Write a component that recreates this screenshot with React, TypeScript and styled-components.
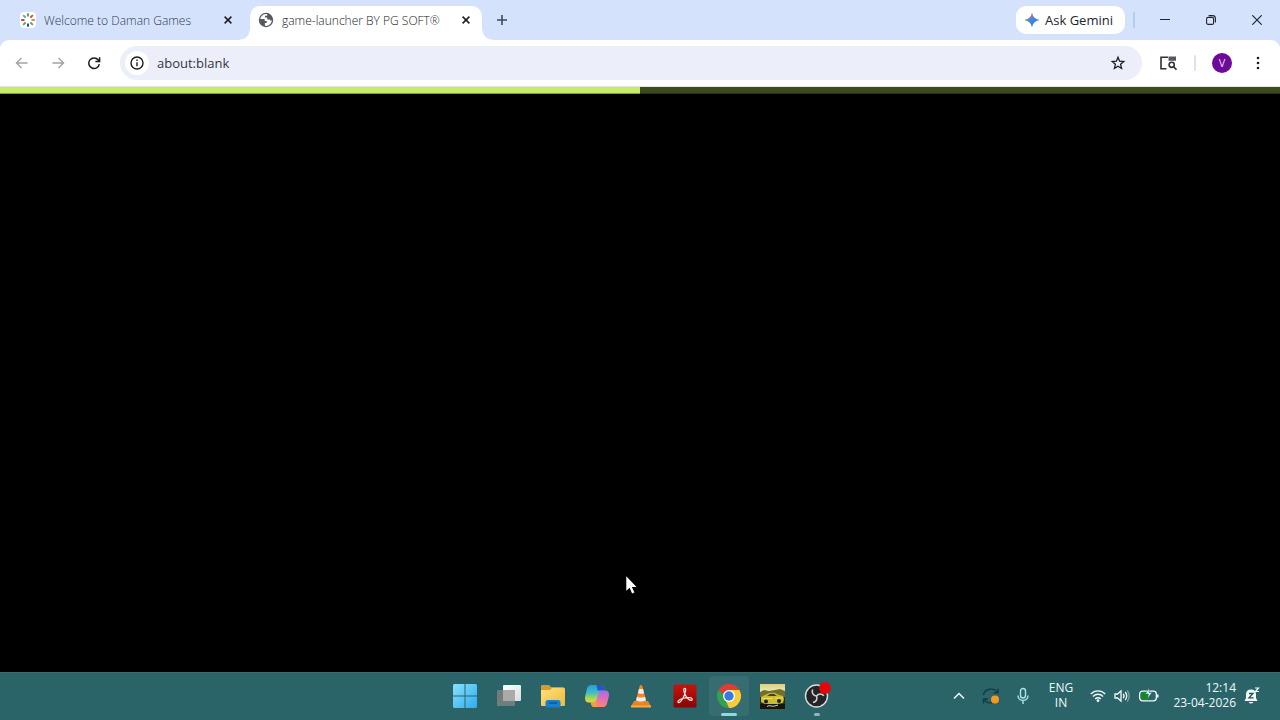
import React from "react";
import styled, { createGlobalStyle, css } from "styled-components";

const GlobalStyle = createGlobalStyle`
  *, *::before, *::after { box-sizing: border-box; }
  body { margin: 0; background: #000; font-family: "Open Sans", "Noto Sans", sans-serif; }
  button { border: 0; padding: 0; background: none; color: inherit; font: inherit; }
  svg { display: block; flex: none; }
`;

const Screen = styled.div`
  min-height: 100vh;
  display: flex;
  flex-direction: column;
`;

const TabStrip = styled.header`
  display: flex;
  height: 40px;
  background: #d5e2fb;
  color: #1f2430;
`;

const Tabs = styled.nav`
  flex: 1;
  min-width: 0;
  display: flex;
  align-items: flex-end;
  gap: 6px;
  padding-left: 12px;
`;

const Tab = styled.div<{ $active?: boolean }>`
  position: relative;
  display: flex;
  align-items: center;
  gap: 8px;
  flex: 0 1 232px;
  min-width: 0;
  height: 34px;
  padding: 0 8px 6px;
  border-radius: 10px 10px 0 0;
  color: #303a50;
  ${(p) =>
    p.$active &&
    css`
      background: #fff;
      color: #222;
      &::before,
      &::after {
        content: "";
        position: absolute;
        bottom: 0;
        width: 10px;
        height: 10px;
      }
      &::before {
        right: 100%;
        background: radial-gradient(circle at 0 0, transparent 9px, #fff 10px);
      }
      &::after {
        left: 100%;
        background: radial-gradient(circle at 100% 0, transparent 9px, #fff 10px);
      }
    `}
`;

const TabTitle = styled.span`
  flex: 1;
  min-width: 0;
  overflow: hidden;
  white-space: nowrap;
  padding-top: 2px;
  font-size: 12px;
  font-weight: 300;
  line-height: 16px;
`;

const IconButton = styled.button<{ $size: number; $dim?: boolean }>`
  flex: none;
  display: grid;
  place-items: center;
  width: ${(p) => p.$size}px;
  height: ${(p) => p.$size}px;
  border-radius: 50%;
  color: ${(p) => (p.$dim ? "#a3a3a6" : "#1c1d20")};
`;

const NewTab = styled(IconButton)`
  margin-bottom: 6px;
  color: #3f4a5e;
`;

const WindowTools = styled.div`
  display: flex;
  align-items: flex-start;
`;

const GeminiButton = styled.button`
  display: flex;
  align-items: center;
  gap: 5px;
  height: 28px;
  margin-top: 6px;
  && { padding: 0 12px 0 8px; background: #fff; }
  border-radius: 10px;
  white-space: nowrap;
`;

const GeminiLabel = styled.span`
  font-size: 13px;
  line-height: 16px;
`;

const Separator = styled.span<{ $tone: string }>`
  width: 2px;
  height: 16px;
  background: ${(p) => p.$tone};
  border-radius: 1px;
`;

const StripSeparator = styled(Separator)`
  margin: 12px 7px 0 8px;
`;

const WindowButton = styled.button`
  display: grid;
  place-items: center;
  width: 46px;
  height: 40px;
`;

const ToolbarBack = styled.div`
  background: #d5e2fb;
`;

const Toolbar = styled.form`
  display: flex;
  align-items: center;
  gap: 12px;
  height: 47px;
  padding: 0 8px;
  background: #fff;
  border-bottom: 1px solid #e2e6df;
  border-radius: 9px 9px 0 0;
`;

const ButtonGroup = styled.div`
  display: flex;
  gap: 8px;
`;

const AddressBar = styled.div`
  flex: 1;
  min-width: 0;
  display: flex;
  align-items: center;
  gap: 8px;
  height: 34px;
  padding: 0 14px 0 5px;
  border-radius: 17px;
  background: #eceffa;
`;

const SiteInfo = styled(IconButton)`
  && { background: #fff; }
`;

const AddressInput = styled.input`
  flex: 1;
  min-width: 0;
  border: 0;
  padding: 0;
  outline: 0;
  background: transparent;
  color: #35363d;
  font-family: inherit;
  font-size: 13px;
  line-height: 20px;
`;

const Avatar = styled.span`
  display: grid;
  place-items: center;
  width: 20px;
  height: 20px;
  border-radius: 50%;
  background: #6d0a9a;
  color: #eadcf2;
  font-size: 11px;
  line-height: 16px;
`;

const Page = styled.main`
  flex: 1;
  position: relative;
  background: #000;
`;

const Track = styled.div`
  height: 7px;
  background: #3c4a1d;
  border-bottom: 1px solid #29330f;
`;

const Fill = styled.div`
  height: 7px;
  background: #c5ec66;
  border-bottom: 1px solid #7d9a33;
`;

const Pointer = styled.svg`
  position: absolute;
  left: 626px;
  top: 489px;
`;

const Taskbar = styled.footer`
  display: grid;
  grid-template-columns: 1fr auto 1fr;
  align-items: center;
  height: 48px;
  background: #2b6468;
  box-shadow: inset 0 1px #3d6a6d;
  color: #f0fafa;
`;

const Apps = styled.nav`
  grid-column: 2;
  display: flex;
  gap: 4px;
  padding-left: 1px;
`;

const AppButton = styled.button<{ $active?: boolean; $mark?: number }>`
  position: relative;
  display: grid;
  place-items: center;
  width: 40px;
  height: 40px;
  border-radius: 4px;
  && { background: ${(p) => (p.$active ? "#376d71" : "transparent")}; }
  &::after {
    content: "";
    position: absolute;
    bottom: 0;
    width: ${(p) => p.$mark ?? 0}px;
    height: 3px;
    border-radius: 2px;
    background: ${(p) => (p.$active ? "#8adbe4" : "#94b5b8")};
  }
`;

const Tray = styled.div`
  display: flex;
  justify-content: flex-end;
  align-items: center;
  padding-right: 20px;
`;

const TrayButton = styled.button<{ $width: number }>`
  display: grid;
  place-items: center;
  width: ${(p) => p.$width}px;
  height: 40px;
`;

const TrayText = styled.span`
  display: block;
  padding-bottom: 2px;
  font-size: 12px;
  line-height: 15px;
  white-space: nowrap;
`;

const QuickSettings = styled.button`
  && { padding: 0 7px; }
  display: flex;
  align-items: center;
  gap: 8px;
  height: 40px;
`;

const Clock = styled.button`
  display: flex;
  align-items: center;
  gap: 8px;
  height: 40px;
`;

const ClockText = styled(TrayText)`
  min-width: 69px;
  text-align: right;
`;

const CloseIcon = () => (
  <svg width="10" height="10" viewBox="0 0 10 10" stroke="currentColor" strokeWidth="1.5">
    <path d="M1.6 1.6l6.8 6.8M8.4 1.6L1.6 8.4" />
  </svg>
);

const BurstIcon = () => {
  const colors = ["#5f9a60", "#bb5148", "#d98b4d", "#54a07c", "#334c55", "#59a56d", "#c24945", "#73a79e"];
  return (
    <svg width="16" height="16" viewBox="0 0 16 16">
      <rect width="16" height="16" rx="4" fill="#fff" />
      {colors.map((c, i) => (
        <path key={i} d="M8 1.9v1.900" stroke={c} strokeWidth="1.900" strokeLinecap="round" transform={`rotate(${i * 45} 8 8)`} />
      ))}
    </svg>
  );
};

const GlobeIcon = () => (
  <svg width="16" height="16" viewBox="0 0 16 16">
    <circle cx="8" cy="8" r="7.2" fill="#56595e" />
    <path d="M9.2 2.2C6 1.5 2.8 3.7 2.2 7l1.4.1h3.1v1.8h2v2.2H6.9v2.7c3.4.6 6.6-1.7 7-5.2h-1.700V7.400H9.200V5.500H7V3.700h2.200z" fill="#fff" />
  </svg>
);

const GeminiIcon = () => (
  <svg width="16" height="16" viewBox="0 0 16 16">
    <defs>
      <linearGradient id="gem" x1="0.3" y1="0" x2="0.7" y2="0.8">
        <stop offset="0.1" stopColor="#ec5a50" />
        <stop offset="0.42" stopColor="#7a7fc0" />
        <stop offset="0.6" stopColor="#3b86ee" />
        <stop offset="1" stopColor="#367df0" />
      </linearGradient>
      <linearGradient id="gemWarm" x1="0" y1="0.6" x2="0.6" y2="0.6">
        <stop offset="0.1" stopColor="#efb82e" />
        <stop offset="0.6" stopColor="#4aa95e" />
        <stop offset="1" stopColor="#4aa95e" stopOpacity="0" />
      </linearGradient>
    </defs>
    <path d="M8 .5C9 5 11 7 15.500 8 11 9 9 11 8 15.500 7 11 5 9 .5 8 5 7 7 5 8 .5z" fill="url(#gem)" />
    <path d="M.5 8C5 7 6 6.500 8 8v7.500C7 11 5 9 .5 8z" fill="url(#gemWarm)" />
  </svg>
);

const Arrow = ({ forward }: { forward?: boolean }) => (
  <svg width="14" height="14" viewBox="0 0 14 14" fill="none" stroke="currentColor" strokeWidth="1.4">
    <path d={forward ? "M1.500 7h11M7.500 2l5 5-5 5" : "M12.500 7h-11M6.500 2l-5 5 5 5"} />
  </svg>
);

const ReloadIcon = () => (
  <svg width="14" height="14" viewBox="0 0 14 14" fill="none" stroke="currentColor" strokeWidth="1.5">
    <path d="M12.300 8.100A5.300 5.300 0 1 1 11.300 4L12.300 5.200M12.600 1.200v4.200H8.400" />
  </svg>
);

const InfoIcon = () => (
  <svg width="14" height="14" viewBox="0 0 14 14" fill="none" stroke="currentColor" strokeWidth="1.4">
    <circle cx="7" cy="7" r="6" />
    <path d="M7 6.200v4M7 3.600v1.500" />
  </svg>
);

const StarIcon = () => (
  <svg width="16" height="16" viewBox="0 0 16 16" fill="none" stroke="currentColor" strokeWidth="1.3">
    <path d="M8 2.300l1.600 3.900 4.200.4-3.200 2.700 1 4.200L8 11.300l-3.600 2.200 1-4.200-3.200-2.700 4.200-.4z" />
  </svg>
);

const SidePanelSearchIcon = () => (
  <svg width="18" height="16" viewBox="0 0 18 16" fill="none" stroke="#303237" strokeWidth="1.6">
    <path d="M9 2.300H2v11.400H7.500" />
    <path d="M9.500 1.500h7.500v4.300H9.500z" fill="#55585e" stroke="none" />
    <circle cx="12.700" cy="9.800" r="2.600" />
    <path d="M14.600 11.800l2.900 2.900" />
  </svg>
);

const StartIcon = () => (
  <svg width="24" height="24" viewBox="0 0 24 24">
    <defs>
      <linearGradient id="win" x1="0" y1="0" x2="1" y2="1">
        <stop stopColor="#8be0fb" />
        <stop offset="1" stopColor="#2badf0" />
      </linearGradient>
    </defs>
    <path d="M1 0h10.500v11.500H0V1zM12.500 0H23l1 1v10.500H12.500zM0 12.500h11.500V24H1l-1-1zM12.500 12.500H24V23l-1 1H12.500z" fill="url(#win)" />
  </svg>
);

const TaskViewIcon = () => (
  <svg width="26" height="24" viewBox="0 0 26 24">
    <defs>
      <linearGradient id="tv" x1="0" y1="0" x2="1" y2="1">
        <stop stopColor="#fff" />
        <stop offset="1" stopColor="#d9dede" />
      </linearGradient>
    </defs>
    <rect x="1" y="6" width="18" height="16" rx="1" fill="#737c7d" />
    <rect x="7" y="1" width="18" height="16" rx="1" fill="url(#tv)" />
    <path d="M7 6h12v11H7z" fill="#a9abab" />
  </svg>
);

const FolderIcon = () => (
  <svg width="26" height="24" viewBox="0 0 26 24">
    <defs>
      <linearGradient id="fold" x1="0" y1="0" x2="1" y2="1">
        <stop stopColor="#fde083" />
        <stop offset="1" stopColor="#efbb35" />
      </linearGradient>
    </defs>
    <path d="M1 2q0-1 1-1h7l2 2h12q1 0 1 1v8H1z" fill="#d79d22" />
    <path d="M1 6h9l2-2h12q1 0 1 1v16q0 1-1 1H2q-1 0-1-1z" fill="url(#fold)" />
    <path d="M5.500 23.500v-5q0-2.500 2.500-2.500h10q2.500 0 2.500 2.500v5z" fill="#197fc7" />
    <path d="M9 19h8" stroke="#0b5797" strokeWidth="1.500" />
  </svg>
);

const CopilotIcon = () => (
  <svg width="26" height="24" viewBox="0 0 26 24">
    <defs>
      <linearGradient id="cpA" x1="0" y1="0" x2="0" y2="1">
        <stop stopColor="#249edc" />
        <stop offset="0.45" stopColor="#42bec4" />
        <stop offset="0.75" stopColor="#a5d850" />
        <stop offset="1" stopColor="#edd244" />
      </linearGradient>
      <linearGradient id="cpB" x1="0.5" y1="0" x2="0.4" y2="1">
        <stop stopColor="#a36dea" />
        <stop offset="0.5" stopColor="#e66eb9" />
        <stop offset="1" stopColor="#ff8864" />
      </linearGradient>
    </defs>
    <path d="M7 1h10q2 0 2.600 2l.9 3.500h-4L12.500 17q-.6 1.500-2.500 1.500H5Q.5 18.500 1 13L3 4.500Q4 1 7 1z" fill="url(#cpA)" />
    <path d="M12.500 1H17q2 0 2.600 2l.9 3.500h-7z" fill="#2357c5" />
    <path d="M16.500 6.500H21q4.500 0 4 5L23 19.500q-1 3.500-4 3.500H10q-2 0-2.600-2l-.9-3h3.500q2 0 2.600-2L15 8q.5-1.500 1.500-1.500z" fill="url(#cpB)" />
    <path d="M6.500 18H10q1.500 0 2.300-1.500L13 23h-3q-2 0-2.600-2z" fill="#eba04a" />
  </svg>
);

const VlcIcon = () => (
  <svg width="22" height="24" viewBox="0 0 22 24">
    <path d="M4 17h14l3 5.500H1z" fill="#e78422" />
    <path d="M1 21.500h20v2H1z" fill="#f5ac4f" />
    <path d="M9.800 1.500q1.200-.8 2.400 0L16.500 18q-5.500 3-11 0z" fill="#ef8729" />
    <path d="M9 5h4l1.100 4.200q-3.100 1.300-6.200 0zM7 12.700q4 1.800 8 0l.9 3.500q-4.900 2.600-9.800 0z" fill="#efece7" />
  </svg>
);

const AcrobatIcon = () => (
  <svg width="24" height="24" viewBox="0 0 24 24">
    <defs>
      <linearGradient id="acro" x1="0" y1="0" x2="0" y2="1">
        <stop stopColor="#c8120b" />
        <stop offset="1" stopColor="#850705" />
      </linearGradient>
    </defs>
    <rect x="0.500" y="0.500" width="23" height="23" rx="1.500" fill="url(#acro)" />
    <path d="M11.800 4.300c-1.600 0-1.200 3 .2 6 1.500 3.200 4.200 6.100 6.200 6 1.600-.1 1.600-2.200-1.500-2.600-3.700-.5-9.800 1-11.400 3.200-1 1.500.5 2.500 1.900 1 2.100-2.200 4.600-7.400 5.300-10.800.4-1.800.1-2.800-.7-2.800z" fill="none" stroke="#fbe9e7" strokeWidth="1.200" />
  </svg>
);

const ChromeIcon = () => (
  <svg width="26" height="26" viewBox="0 0 26 26">
    <path d="M13 13L2.600 7A12 12 0 0 1 23.400 7z" fill="#dd3d35" />
    <path d="M13 13L23.400 7A12 12 0 0 1 13 25z" fill="#f9cb36" />
    <path d="M13 13L13 25A12 12 0 0 1 2.600 7z" fill="#32a24f" />
    <path d="M13 7h10.400l-5 9z" fill="#f9cb36" />
    <path d="M18.200 16L13 25l-3-7z" fill="#f9cb36" />
    <path d="M7.800 16L2.600 7l6.400 2z" fill="#32a24f" />
    <path d="M2.600 7A12 12 0 0 1 23.400 7H13L8 12z" fill="#dd3d35" />
    <circle cx="13" cy="13" r="6" fill="#fff" />
    <circle cx="13" cy="13" r="4.700" fill="#3579e4" />
  </svg>
);

const CarPhotoIcon = () => (
  <svg width="25" height="25" viewBox="0 0 25 25">
    <defs>
      <linearGradient id="sky" x1="0" y1="0" x2="0" y2="1">
        <stop stopColor="#d8cf86" />
        <stop offset="1" stopColor="#f1ecb0" />
      </linearGradient>
    </defs>
    <path d="M0 0h25v25H0z" fill="#2a2d12" />
    <path d="M0 0h25v8H0z" fill="url(#sky)" />
    <path d="M0 8l4-2 5 1 6-1 5-1 5 2v6H0z" fill="#6f7030" />
    <path d="M1 13q4-2 6-3 4-2 8-1l4 2 4 1 1 3-1 4-6 1H5l-4-2z" fill="#cbbd2f" />
    <path d="M7 12q3-3 7-2l3 2z" fill="#3a421b" />
    <path d="M2 14.500h11M15 14h8" stroke="#eee05c" />
    <circle cx="6" cy="17.500" r="2" fill="#1d200e" />
    <circle cx="19" cy="17" r="2" fill="#1d200e" />
    <path d="M0 20h25v5H0z" fill="#14160a" />
    <path d="M7 22.500q2-1.500 4-.5t7-1" stroke="#d8d3a0" fill="none" />
  </svg>
);

const ObsIcon = () => (
  <svg width="28" height="28" viewBox="0 0 28 28">
    <circle cx="13.500" cy="14" r="11" fill="#242326" stroke="#d9dddd" strokeWidth="1.400" />
    <g fill="none" stroke="#cdcfd0" strokeWidth="1.600">
      {[0, 120, 240].map((a) => (
        <path key={a} d="M13.500 14c-3.400-.5-5-3.200-3.900-6.400" transform={`rotate(${a} 13.500 14)`} />
      ))}
    </g>
    <circle cx="22" cy="6" r="6" fill="#e4060b" />
  </svg>
);

const SyncIcon = () => (
  <svg width="18" height="18" viewBox="0 0 18 18" fill="none" stroke="#123b47" strokeWidth="1.4">
    <path d="M1.500 8A7.500 6.500 0 0 1 15.500 5.500M16 1.500v4.300h-4.300M1.500 16.500v-4.500h4.500M2 12A7.500 6.500 0 0 0 10 15.800" />
    <circle cx="13" cy="12.500" r="4" fill="#f39a22" stroke="none" />
  </svg>
);

const MicIcon = () => (
  <svg width="14" height="18" viewBox="0 0 14 18" fill="none" stroke="#a9e5e6" strokeWidth="1.4">
    <rect x="4.500" y="1.500" width="5" height="9.500" rx="2.500" />
    <path d="M2 8.500c0 6.500 10 6.500 10 0M7 13.500V17" />
  </svg>
);

const WifiIcon = () => (
  <svg width="16" height="16" viewBox="0 0 16 16" fill="none" stroke="currentColor" strokeWidth="1.4">
    <path d="M.8 6c4-4.200 10.400-4.200 14.400 0M3 8.500c2.800-3 7.200-3 10 0M5.200 11c1.600-1.700 4-1.700 5.600 0" />
    <circle cx="8" cy="12.700" r="1.400" fill="currentColor" stroke="none" />
  </svg>
);

const VolumeIcon = () => (
  <svg width="16" height="16" viewBox="0 0 16 16" fill="none" stroke="currentColor" strokeWidth="1.300">
    <path d="M1 6v4h2.500L7 13V3L3.500 6z" />
    <path d="M9.200 5.800q1.600 2.200 0 4.400M11.200 4q3 4 0 8" />
    <path d="M13.200 2.500q4 5.500 0 11" opacity="0.4" />
  </svg>
);

const BatteryIcon = () => (
  <svg width="22" height="16" viewBox="0 0 22 16">
    <rect x="3" y="4" width="8" height="8" rx="2" fill="#128a25" />
    <rect x="1.600" y="3.200" width="16.800" height="9.600" rx="3" fill="none" stroke="#effafa" strokeWidth="1.300" />
    <path d="M19.800 6.500v3" stroke="#effafa" strokeWidth="1.500" />
    <path d="M11 0L7.500 6h3l-1 4.500L14 4.500h-3z" fill="#effafa" stroke="#2b6468" strokeWidth="0.500" />
  </svg>
);

const BellIcon = () => (
  <svg width="16" height="18" viewBox="0 0 16 18">
    <path d="M.5 14L2 11V7.500q0-5 5-5t5 5V11l1.500 3zM4.500 15h5q-2.500 3-5 0z" fill="#f0fafa" />
    <path d="M5 6.500h4L5 10.800h4.500" stroke="#235054" strokeWidth="1.300" fill="none" />
    <path d="M11 1h3.500L11.500 4.500h3.500" stroke="#f0fafa" strokeWidth="1.200" fill="none" />
  </svg>
);

const apps = [
  { name: "Start", icon: <StartIcon /> },
  { name: "Task view", icon: <TaskViewIcon /> },
  { name: "File Explorer", icon: <FolderIcon /> },
  { name: "Copilot", icon: <CopilotIcon /> },
  { name: "VLC", icon: <VlcIcon /> },
  { name: "Acrobat", icon: <AcrobatIcon /> },
  { name: "Chrome", icon: <ChromeIcon />, active: true, mark: 16 },
  { name: "Game", icon: <CarPhotoIcon /> },
  { name: "OBS Studio", icon: <ObsIcon />, mark: 6 },
];

export default function App() {
  const progress = 50;
  return (
    <Screen>
      <GlobalStyle />
      <TabStrip>
        <Tabs aria-label="Tabs">
          <Tab>
            <BurstIcon />
            <TabTitle>Welcome to Daman Games</TabTitle>
            <IconButton $size={16} aria-label="Close tab"><CloseIcon /></IconButton>
          </Tab>
          <Tab $active>
            <GlobeIcon />
            <TabTitle>game-launcher BY PG SOFT®</TabTitle>
            <IconButton $size={16} aria-label="Close tab"><CloseIcon /></IconButton>
          </Tab>
          <NewTab $size={28} aria-label="New tab">
            <svg width="12" height="12" viewBox="0 0 12 12" stroke="currentColor" strokeWidth="1.6">
              <path d="M6 1v10M1 6h10" />
            </svg>
          </NewTab>
        </Tabs>
        <WindowTools>
          <GeminiButton><GeminiIcon /><GeminiLabel>Ask Gemini</GeminiLabel></GeminiButton>
          <StripSeparator $tone="#b0cff0" />
          <WindowButton aria-label="Minimize">
            <svg width="10" height="10" viewBox="0 0 10 10" stroke="currentColor"><path d="M0 4.500h10" /></svg>
          </WindowButton>
          <WindowButton aria-label="Restore">
            <svg width="10" height="10" viewBox="0 0 10 10" fill="none" stroke="currentColor" strokeWidth="1.100">
              <rect x="0.600" y="2.400" width="7" height="7" rx="1.500" />
              <path d="M2.600.6h4q2.800 0 2.800 2.800V7.500" />
            </svg>
          </WindowButton>
          <WindowButton aria-label="Close">
            <svg width="10" height="10" viewBox="0 0 10 10" stroke="currentColor" strokeWidth="1.200">
              <path d="M.3.3l9.400 9.400M9.700.3L.3 9.700" />
            </svg>
          </WindowButton>
        </WindowTools>
      </TabStrip>
      <ToolbarBack>
        <Toolbar onSubmit={(e) => e.preventDefault()}>
          <ButtonGroup>
            <IconButton type="button" $size={28} $dim aria-label="Back"><Arrow /></IconButton>
            <IconButton type="button" $size={28} $dim aria-label="Forward"><Arrow forward /></IconButton>
            <IconButton type="button" $size={28} aria-label="Reload"><ReloadIcon /></IconButton>
          </ButtonGroup>
          <AddressBar>
            <SiteInfo type="button" $size={24} aria-label="Site information"><InfoIcon /></SiteInfo>
            <AddressInput aria-label="Address" defaultValue="about:blank" spellCheck={false} />
            <IconButton type="button" $size={20} aria-label="Bookmark"><StarIcon /></IconButton>
          </AddressBar>
          <IconButton type="button" $size={28} aria-label="Search side panel"><SidePanelSearchIcon /></IconButton>
          <Separator $tone="#dfe3e8" />
          <ButtonGroup>
            <IconButton type="button" $size={28} aria-label="Profile"><Avatar>V</Avatar></IconButton>
            <IconButton type="button" $size={28} aria-label="Menu">
              <svg width="4" height="14" viewBox="0 0 4 14" fill="currentColor">
                <circle cx="2" cy="2" r="1.300" /><circle cx="2" cy="7" r="1.300" /><circle cx="2" cy="12" r="1.300" />
              </svg>
            </IconButton>
          </ButtonGroup>
        </Toolbar>
      </ToolbarBack>
      <Page>
        <Track role="progressbar" aria-label="Loading" aria-valuenow={progress}>
          <Fill style={{ width: `${progress}%` }} />
        </Track>
        <Pointer width="12" height="19" viewBox="0 0 12 19">
          <path d="M.3.300v14.500l3.300-3.100 2.500 5.700 2.300-1-2.500-5.500h4.600z" fill="#fff" />
        </Pointer>
      </Page>
      <Taskbar>
        <Apps aria-label="Taskbar">
          {apps.map((a) => (
            <AppButton key={a.name} aria-label={a.name} $active={a.active} $mark={a.mark}>{a.icon}</AppButton>
          ))}
        </Apps>
        <Tray>
          <TrayButton $width={32} aria-label="Hidden icons">
            <svg width="12" height="8" viewBox="0 0 12 8" fill="none" stroke="currentColor" strokeWidth="1.500"><path d="M1 6.500l5-5 5 5" /></svg>
          </TrayButton>
          <TrayButton $width={32} aria-label="Sync"><SyncIcon /></TrayButton>
          <TrayButton $width={32} aria-label="Microphone"><MicIcon /></TrayButton>
          <TrayButton $width={44}><TrayText>ENG<br />IN</TrayText></TrayButton>
          <QuickSettings aria-label="Quick settings"><WifiIcon /><VolumeIcon /><BatteryIcon /></QuickSettings>
          <Clock><ClockText>12:14<br />23-04-2026</ClockText><BellIcon /></Clock>
        </Tray>
      </Taskbar>
    </Screen>
  );
}
